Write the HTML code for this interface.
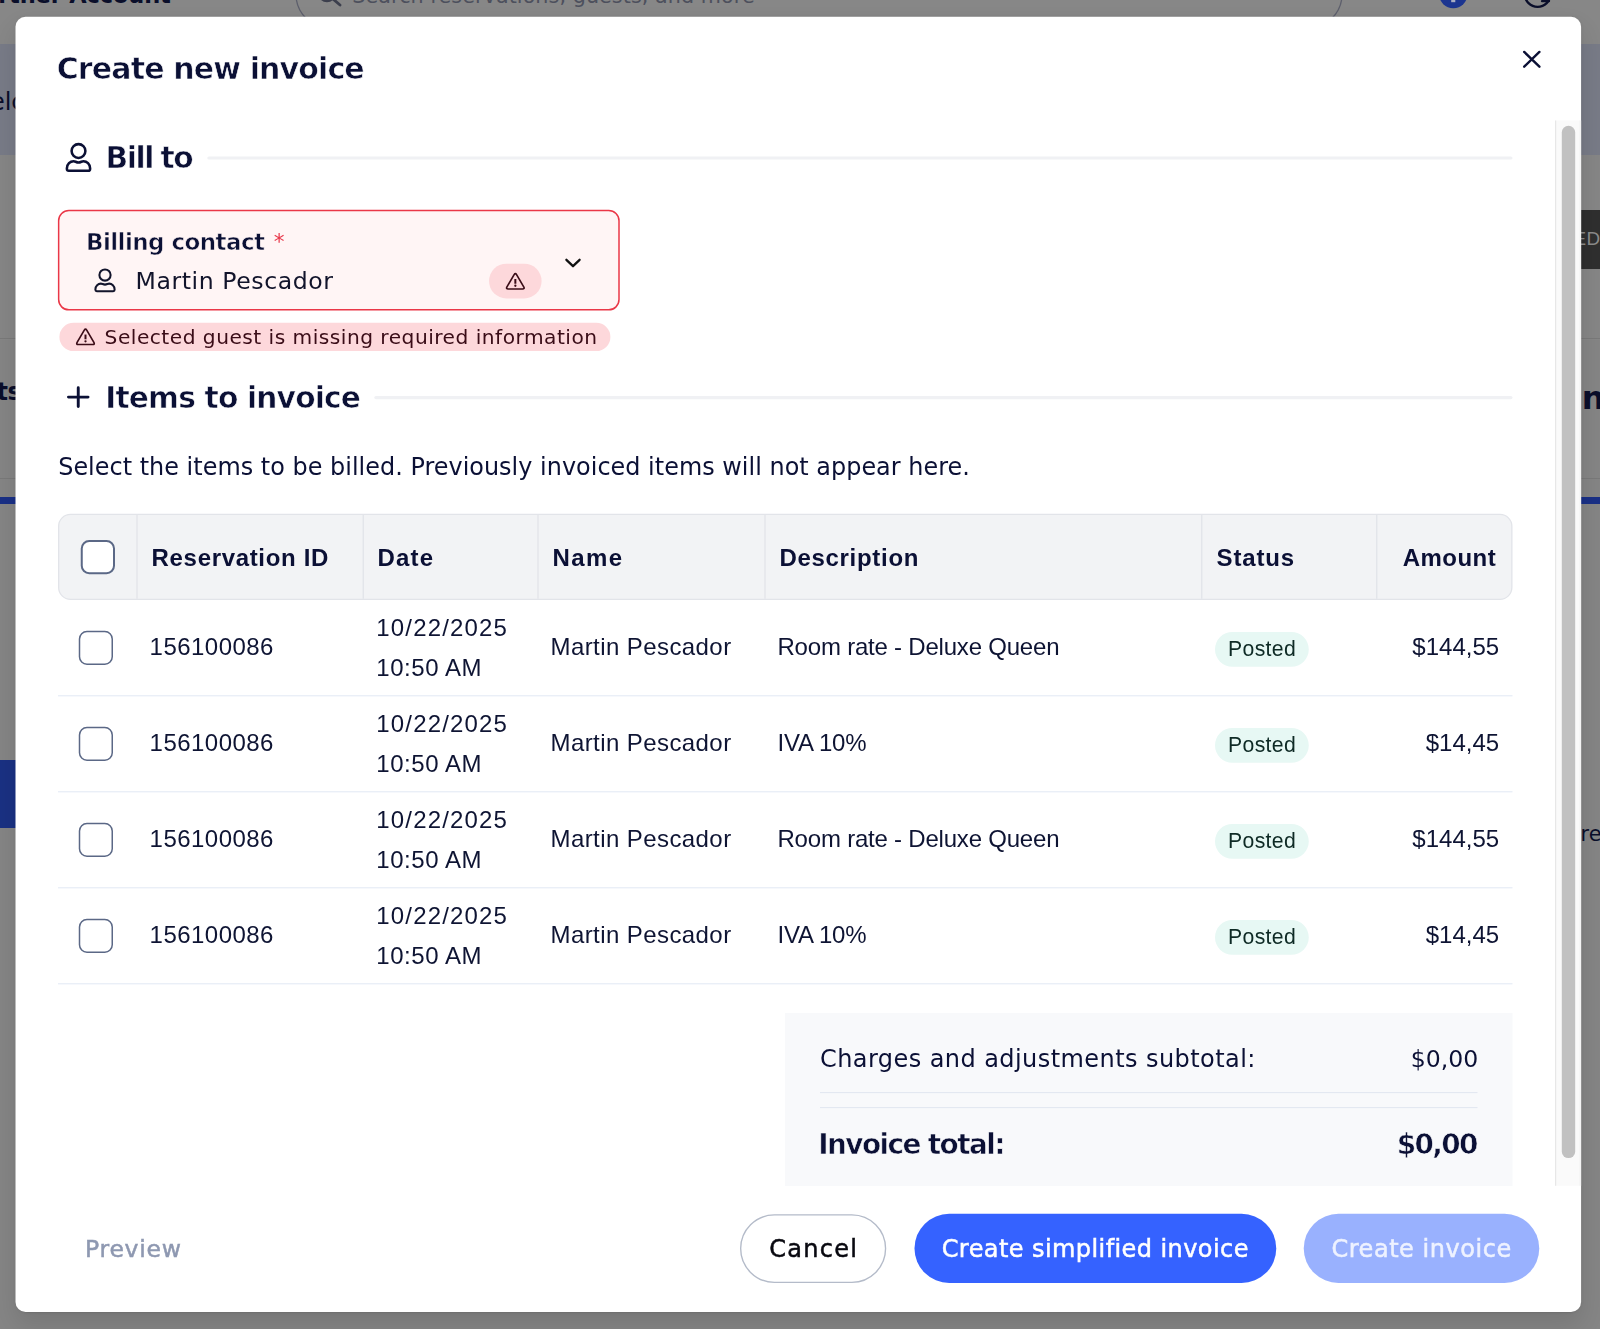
<!DOCTYPE html>
<html lang="en">
<head>
<meta charset="utf-8">
<title>Create new invoice</title>
<style>
*{box-sizing:border-box;margin:0;padding:0}
html,body{width:1600px;height:1329px;overflow:hidden}
body{position:relative;background:#878787;font-family:"DejaVu Sans","Liberation Sans",sans-serif;color:#0b1035}
svg{position:absolute;overflow:visible}
/* ---------- dimmed page behind the dialog ---------- */
.bg{position:absolute;left:0;top:0;width:1600px;height:1329px;overflow:hidden;background:#878787}
.bg div{position:absolute;white-space:nowrap}
/* ---------- dialog ---------- */
.modal{position:absolute;left:17px;top:18px;width:1563px;height:1293px;background:#fff;border-radius:10px;box-shadow:0 1px 2px rgba(0,0,0,.2),0 12px 24px 2px rgba(0,0,0,.11),0 0 5px rgba(0,0,0,.08)}
.page{position:absolute;left:0;top:0;width:1600px;height:1329px;will-change:transform}
.page div{position:absolute;white-space:nowrap}
.pp{font-family:"DejaVu Sans","Liberation Sans",sans-serif}
.rb{font-family:"Liberation Sans","DejaVu Sans",sans-serif}
.h1{left:56.7px;top:47.3px;font-size:30px;line-height:44px;font-weight:700;-webkit-text-stroke:.6px #fff;letter-spacing:-.86px}
.h2{font-size:29.7px;line-height:44px;font-weight:700;-webkit-text-stroke:.6px #fff;letter-spacing:-.75px}
.para{left:58.2px;top:449.8px;font-size:23.9px;line-height:34px;letter-spacing:.03px}
/* billing contact */
.lab{left:86px;top:225.1px;font-size:23px;line-height:34px;font-weight:700;-webkit-text-stroke:.6px #fff5f5;letter-spacing:-.56px}
.star{left:273.7px;top:224.6px;font-size:21.5px;line-height:34px;color:#e8374a}
.val{left:135.5px;top:264.3px;font-size:23.6px;line-height:34px;color:#12142b;letter-spacing:.57px}
.errt{left:104.6px;top:322.2px;font-size:20.2px;line-height:30px;color:#3a0c17;letter-spacing:.48px}
/* table */
.th{top:535.8px;height:44px;line-height:44px;font-weight:700;font-size:24px;letter-spacing:.67px;color:#0b1035}
.td{font-size:24px;line-height:40px;color:#0e1433;letter-spacing:.14px}
.pt{left:1228px;font-size:21.2px;line-height:34px;color:#0e2a25;letter-spacing:.36px}
.amt{text-align:right}
/* footer */
.tb{font-size:27.9px;line-height:44px;font-weight:700;-webkit-text-stroke:.6px #f8f9fb}
.bt{top:1231.5px;font-size:24px;line-height:34px;font-weight:400;-webkit-text-stroke:.5px currentColor}
</style>
</head>
<body>
<div class="bg">
<div style="left:0;top:44px;width:1600px;height:111px;background:#787b87"></div>
<div style="left:0;top:155px;width:1600px;height:183.5px;background:#868686"></div>
<div style="left:0;top:338.3px;width:1600px;height:1.2px;background:#797979"></div>
<div style="left:0;top:339.5px;width:1600px;height:139px;background:#858585"></div>
<div style="left:0;top:478px;width:1600px;height:1.2px;background:#797979"></div>
<div style="left:0;top:479.2px;width:1600px;height:850px;background:#858585"></div>
<div style="left:0;top:497px;width:1600px;height:6.7px;background:#1a3086"></div>
<div style="left:0;top:760px;width:15.5px;height:68.3px;background:#1a3183"></div>
<div style="left:1581px;top:210.2px;width:19px;height:58.5px;background:#2f2f2f"></div>
<div class="rb" style="left:1573.6px;top:225.3px;font-size:18.9px;line-height:28px;color:#8b8b8b;letter-spacing:.3px">ED</div>
<div class="pp" style="right:1429.4px;top:-20px;font-size:22.5px;line-height:30px;font-weight:700;color:#0a0e2a;letter-spacing:-.15px">Partner Account</div>
<div class="pp" style="left:352.3px;top:-19.2px;font-size:20.7px;line-height:30px;color:#4d505d;letter-spacing:.07px">Search reservations, guests, and more</div>
<svg width="1600" height="40" viewBox="0 0 1600 40" style="left:0;top:0"><rect x="295.95" y="-40.35" width="1046.1" height="68.7" rx="34.35" fill="none" stroke="#5d5f6c" stroke-width="1.3"/><circle cx="327" cy="-7" r="8" fill="none" stroke="#3c3f4d" stroke-width="2.4"/><path d="M333.2 -0.9 L340 5" stroke="#3c3f4d" stroke-width="2.8" stroke-linecap="round"/><circle cx="1453.3" cy="-5.8" r="14.1" fill="#1c3590"/><rect x="1451.2" y="-6" width="4.1" height="8.2" fill="#a9adc2"/><circle cx="1537.6" cy="-5.9" r="12.8" fill="none" stroke="#0a0e2a" stroke-width="2.4"/><path d="M1542 1.2 H1549" stroke="#0a0e2a" stroke-width="2.2" stroke-linecap="round"/></svg>
<div class="pp" style="left:-32.4px;top:84.6px;font-size:24px;line-height:34px;color:#0a0e2a">Welcome</div>
<div class="pp" style="right:1578.7px;top:374.3px;font-size:24px;line-height:36px;font-weight:700;color:#0a0e2a;letter-spacing:-.5px">Guests</div>
<div class="pp" style="left:1581.8px;top:376.3px;font-size:32px;line-height:44px;font-weight:700;color:#0a0e2a">nvoice</div>
<div class="pp" style="left:1580.6px;top:816.8px;font-size:20.7px;line-height:34px;color:#0a0e2a">reservation</div>
</div>
<div class="modal"></div>
<div class="page">
<svg width="1600" height="1329" viewBox="0 0 1600 1329" style="left:0;top:0">
<rect x="15.50" y="16.75" width="1565.60" height="1295.15" rx="10.00" fill="#fff"/>
<path d="M1524.2 51.9 L1539.4 66.7 M1539.4 51.9 L1524.2 66.7" stroke="#0b1035" stroke-width="2.4" stroke-linecap="round" fill="none"/>
<rect x="1555.00" y="120.50" width="26.10" height="1065.25" rx="0.00" fill="#fafafa"/>
<rect x="1555" y="120.5" width="1.2" height="1065.25" fill="#e7e7e7"/>
<rect x="1579.6" y="120.5" width="1" height="1065.25" fill="#f1f1f1"/>
<rect x="1561.80" y="125.70" width="13.40" height="1032.40" rx="6.70" fill="#c1c1c1"/>
<g transform="translate(64,141)" fill="none" stroke="#0b1035" stroke-width="2.55" stroke-linejoin="round"><circle cx="14.5" cy="10" r="6.9"/><path d="M2.9 27.3 C2.9 23 6.2 20.2 9.6 20.2 C11.2 20.2 12.3 21.5 14.5 21.5 C16.7 21.5 17.8 20.2 19.4 20.2 C22.8 20.2 26.1 23 26.1 27.3 V27.9 Q26.1 29.7 24.3 29.7 H4.7 Q2.9 29.7 2.9 27.9 Z"/></g>
<rect x="207.30" y="156.40" width="1305.20" height="3.20" rx="1.60" fill="#f0f1f4"/>
<rect x="58.65" y="210.50" width="560.35" height="99.35" rx="10.25" fill="#fff5f5" stroke="#ea3747" stroke-width="1.5"/>
<g transform="translate(93,267)" fill="none" stroke="#12142b" stroke-width="2.05" stroke-linejoin="round"><circle cx="12" cy="8" r="5.6"/><path d="M2.4 22.4 C2.4 18.8 5.1 16.6 7.9 16.6 C9.2 16.6 10.2 17.6 12 17.6 C13.8 17.6 14.8 16.6 16.1 16.6 C18.9 16.6 21.6 18.8 21.6 22.4 V22.8 Q21.6 24.2 20.2 24.2 H3.8 Q2.4 24.2 2.4 22.8 Z"/></g>
<rect x="489.00" y="263.75" width="52.60" height="34.65" rx="17.30" fill="#fdd8db"/>
<g transform="translate(505.85,272.45)"><path d="M8.29 2.17 Q9.50 0.10 10.71 2.17 L17.89 14.43 Q19.10 16.50 16.70 16.50 L2.30 16.50 Q-0.10 16.50 1.11 14.43 Z" fill="none" stroke="#3a0c17" stroke-width="1.65" stroke-linejoin="round"/><path d="M9.5 6.55 V11.3" stroke="#3a0c17" stroke-width="2"/><circle cx="9.5" cy="13.3" r="1.15" fill="#3a0c17"/></g>
<path d="M566.4 259.8 L573 266.2 L579.6 259.8" fill="none" stroke="#111" stroke-width="2.3" stroke-linecap="round" stroke-linejoin="round"/>
<rect x="59.40" y="322.80" width="551.00" height="28.30" rx="14.15" fill="#fdd8db"/>
<g transform="translate(76.0,328.0)"><path d="M8.29 2.17 Q9.50 0.10 10.71 2.17 L17.89 14.43 Q19.10 16.50 16.70 16.50 L2.30 16.50 Q-0.10 16.50 1.11 14.43 Z" fill="none" stroke="#3a0c17" stroke-width="1.65" stroke-linejoin="round"/><path d="M9.5 6.55 V11.3" stroke="#3a0c17" stroke-width="2"/><circle cx="9.5" cy="13.3" r="1.15" fill="#3a0c17"/></g>
<path d="M78.25 387.7 V406.5 M68.45 397.1 H88.05" stroke="#0b1035" stroke-width="2.9" stroke-linecap="round"/>
<rect x="374.30" y="396.00" width="1138.20" height="3.20" rx="1.60" fill="#f0f1f4"/>
<rect x="58.65" y="514.40" width="1453.20" height="84.95" rx="11.85" fill="#f2f3f5" stroke="#e2e4e9" stroke-width="1.3"/>
<rect x="136.35" y="515" width="1.3" height="83.8" fill="#e2e4e9"/>
<rect x="362.60" y="515" width="1.3" height="83.8" fill="#e2e4e9"/>
<rect x="537.35" y="515" width="1.3" height="83.8" fill="#e2e4e9"/>
<rect x="764.35" y="515" width="1.3" height="83.8" fill="#e2e4e9"/>
<rect x="1201.10" y="515" width="1.3" height="83.8" fill="#e2e4e9"/>
<rect x="1376.10" y="515" width="1.3" height="83.8" fill="#e2e4e9"/>
<rect x="81.75" y="541.00" width="32.25" height="32.25" rx="7.50" fill="#fff" stroke="#5b6886" stroke-width="2"/>
<rect x="79.50" y="631.50" width="32.75" height="32.75" rx="7.45" fill="#fff" stroke="#5b6886" stroke-width="1.5"/>
<rect x="1215.00" y="632.00" width="93.75" height="34.75" rx="17.40" fill="#e7f8f4"/>
<rect x="58" y="695.10" width="1454.5" height="1.3" fill="#e8eef7"/>
<rect x="79.50" y="727.50" width="32.75" height="32.75" rx="7.45" fill="#fff" stroke="#5b6886" stroke-width="1.5"/>
<rect x="1215.00" y="728.00" width="93.75" height="34.75" rx="17.40" fill="#e7f8f4"/>
<rect x="58" y="791.10" width="1454.5" height="1.3" fill="#e8eef7"/>
<rect x="79.50" y="823.50" width="32.75" height="32.75" rx="7.45" fill="#fff" stroke="#5b6886" stroke-width="1.5"/>
<rect x="1215.00" y="824.00" width="93.75" height="34.75" rx="17.40" fill="#e7f8f4"/>
<rect x="58" y="887.10" width="1454.5" height="1.3" fill="#e8eef7"/>
<rect x="79.50" y="919.50" width="32.75" height="32.75" rx="7.45" fill="#fff" stroke="#5b6886" stroke-width="1.5"/>
<rect x="1215.00" y="920.00" width="93.75" height="34.75" rx="17.40" fill="#e7f8f4"/>
<rect x="58" y="983.10" width="1454.5" height="1.3" fill="#e8eef7"/>
<rect x="785.00" y="1013.00" width="727.50" height="173.00" rx="0.00" fill="#f8f9fb"/>
<rect x="820" y="1092" width="657.5" height="1.1" fill="#e3e8f1"/><rect x="820" y="1107" width="657.5" height="1.1" fill="#e3e8f1"/>
<rect x="740.67" y="1214.92" width="144.90" height="67.40" rx="33.73" fill="#fff" stroke="#b4bbc9" stroke-width="1.35"/>
<rect x="914.50" y="1213.75" width="361.75" height="69.25" rx="34.70" fill="#3562ff"/>
<rect x="1303.75" y="1213.75" width="235.50" height="69.25" rx="34.70" fill="#99b1fe"/>
</svg>
<div class="h1 pp">Create new invoice</div>
<div class="h2 pp" style="left:105.5px;top:136.1px;letter-spacing:-1.4px;word-spacing:-1.6px">Bill to</div>
<div class="lab pp">Billing contact</div><div class="star pp">*</div>
<div class="val pp">Martin Pescador</div>
<div class="errt pp">Selected guest is missing required information</div>
<div class="h2 pp" style="left:105.2px;top:376.1px;letter-spacing:-.83px">Items to invoice</div>
<div class="para pp">Select the items to be billed. Previously invoiced items will not appear here.</div>
<div class="th rb" style="left:151.6px;letter-spacing:0.67px">Reservation ID</div>
<div class="th rb" style="left:377.6px;letter-spacing:1.15px">Date</div>
<div class="th rb" style="left:552.6px;letter-spacing:1.37px">Name</div>
<div class="th rb" style="left:779.4px;letter-spacing:0.7px">Description</div>
<div class="th rb" style="left:1216.6px;letter-spacing:0.84px">Status</div>
<div class="th rb" style="left:1402.7px;letter-spacing:0.48px">Amount</div>
<div class="td rb" style="left:149.6px;top:627.0px;letter-spacing:.46px">156100086</div>
<div class="td rb" style="left:376.3px;top:607.6px;letter-spacing:1.17px">10/22/2025</div>
<div class="td rb" style="left:376.3px;top:647.6px;letter-spacing:.55px">10:50 AM</div>
<div class="td rb" style="left:550.5px;top:627.0px;letter-spacing:.42px">Martin Pescador</div>
<div class="td rb" style="left:777.5px;top:627.0px;letter-spacing:-.21px">Room rate - Deluxe Queen</div>
<div class="pt rb" style="top:632.2px">Posted</div>
<div class="td rb amt" style="right:100.9px;top:627.0px;letter-spacing:0">$144,55</div>
<div class="td rb" style="left:149.6px;top:723.0px;letter-spacing:.46px">156100086</div>
<div class="td rb" style="left:376.3px;top:703.6px;letter-spacing:1.17px">10/22/2025</div>
<div class="td rb" style="left:376.3px;top:743.6px;letter-spacing:.55px">10:50 AM</div>
<div class="td rb" style="left:550.5px;top:723.0px;letter-spacing:.42px">Martin Pescador</div>
<div class="td rb" style="left:777.5px;top:723.0px;letter-spacing:-.21px">IVA 10%</div>
<div class="pt rb" style="top:728.2px">Posted</div>
<div class="td rb amt" style="right:100.9px;top:723.0px;letter-spacing:0">$14,45</div>
<div class="td rb" style="left:149.6px;top:819.0px;letter-spacing:.46px">156100086</div>
<div class="td rb" style="left:376.3px;top:799.6px;letter-spacing:1.17px">10/22/2025</div>
<div class="td rb" style="left:376.3px;top:839.6px;letter-spacing:.55px">10:50 AM</div>
<div class="td rb" style="left:550.5px;top:819.0px;letter-spacing:.42px">Martin Pescador</div>
<div class="td rb" style="left:777.5px;top:819.0px;letter-spacing:-.21px">Room rate - Deluxe Queen</div>
<div class="pt rb" style="top:824.2px">Posted</div>
<div class="td rb amt" style="right:100.9px;top:819.0px;letter-spacing:0">$144,55</div>
<div class="td rb" style="left:149.6px;top:915.0px;letter-spacing:.46px">156100086</div>
<div class="td rb" style="left:376.3px;top:895.6px;letter-spacing:1.17px">10/22/2025</div>
<div class="td rb" style="left:376.3px;top:935.6px;letter-spacing:.55px">10:50 AM</div>
<div class="td rb" style="left:550.5px;top:915.0px;letter-spacing:.42px">Martin Pescador</div>
<div class="td rb" style="left:777.5px;top:915.0px;letter-spacing:-.21px">IVA 10%</div>
<div class="pt rb" style="top:920.2px">Posted</div>
<div class="td rb amt" style="right:100.9px;top:915.0px;letter-spacing:0">$14,45</div>
<div class="pp" style="left:820px;top:1042.3px;font-size:24px;line-height:34px;letter-spacing:.43px">Charges and adjustments subtotal:</div>
<div class="pp" style="right:121.8px;top:1042.3px;font-size:23.6px;line-height:34px">$0,00</div>
<div class="pp tb" style="left:818.3px;top:1123.2px;letter-spacing:-1.59px">Invoice total:</div>
<div class="pp tb" style="right:123.3px;top:1123.2px;letter-spacing:-1.65px">$0,00</div>
<div class="bt pp" style="left:85.1px;color:#8e98b1;letter-spacing:.72px;font-size:23.5px">Preview</div>
<div class="bt pp" style="left:769.2px;color:#08080f;letter-spacing:1.3px">Cancel</div>
<div class="bt pp" style="left:941.7px;color:#fff;letter-spacing:.42px">Create simplified invoice</div>
<div class="bt pp" style="left:1331.4px;color:#eef2ff;letter-spacing:.55px">Create invoice</div>
</div>
</body>
</html>
